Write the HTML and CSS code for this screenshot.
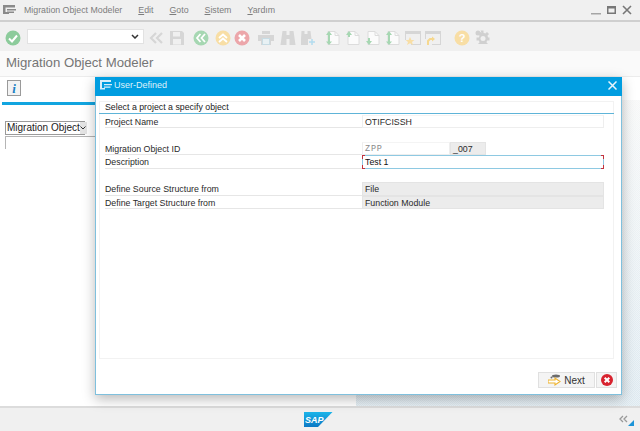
FILE: index.html
```html
<!DOCTYPE html>
<html lang="en">
<head>
<meta charset="utf-8">
<title>Migration Object Modeler</title>
<link rel="stylesheet" href="styles.css">
</head>
<body>
<div class="app">
  <header class="menubar">
    <svg class="menu-ico" width="13" height="10" viewBox="0 0 13 10"><path d="M0 0h12v2.500H2.500V7H6v2H0z" fill="#8a8a8a"/><path d="M4 4h9v1.500H4zM4 6.500h7V8H4z" fill="#8a8a8a"/></svg>
    <nav class="menus">
      <span class="menu">Migration Object Modeler</span>
      <span class="menu"><u>E</u>dit</span>
      <span class="menu"><u>G</u>oto</span>
      <span class="menu"><u>S</u>istem</span>
      <span class="menu"><u>Y</u>ardım</span>
    </nav>
    <div class="winctl">
      <svg width="10" height="10" viewBox="0 0 10 10"><rect x="0" y="8" width="10" height="1.500" fill="#a5a5a5"/></svg>
      <svg width="9" height="10" viewBox="0 0 9 10"><path d="M0 1h9v8H0zM1.500 3.500v4h6v-4z" fill="#777" fill-rule="evenodd"/></svg>
      <svg width="10" height="10" viewBox="0 0 10 10"><path d="M1 1l8 8M9 1l-8 8" stroke="#777" stroke-width="1.600"/></svg>
    </div>
  </header>

  <div class="toolbar">
    <svg class="ic" viewBox="0 0 16 16"><circle cx="8" cy="8" r="7.500" fill="#8ccb9b"/><path d="M4 8.500l3 3 5-6" fill="none" stroke="#fff" stroke-width="2"/></svg>
    <div class="cmd"><svg width="8" height="5" viewBox="0 0 8 5"><path d="M1 1l3 3 3-3" fill="none" stroke="#333" stroke-width="1.500"/></svg></div>
    <svg class="ic" viewBox="0 0 16 16"><path d="M8 3L3 8l5 5M14 3L9 8l5 5" fill="none" stroke="#d6d6d6" stroke-width="2.200"/></svg>
    <svg class="ic ml5" viewBox="0 0 16 16"><path d="M1 1h12l2 2v12H1z" fill="#d6d6d6"/><rect x="4" y="2" width="7" height="4.500" fill="#f0f0f0"/><rect x="4" y="9" width="8" height="5.500" fill="#f0f0f0"/></svg>
    <svg class="ic ml8" viewBox="0 0 16 16"><circle cx="8" cy="8" r="7.500" fill="#a6d7b2"/><path d="M7.500 4L4 8l3.500 4M12 4L8.500 8l3.500 4" fill="none" stroke="#fff" stroke-width="1.800"/></svg>
    <svg class="ic ml6" viewBox="0 0 16 16"><circle cx="8" cy="8" r="7.500" fill="#f8dea5"/><path d="M4 8l4-3.500L12 8M4 12l4-3.500 4 3.500" fill="none" stroke="#fff" stroke-width="1.800"/></svg>
    <svg class="ic ml3" viewBox="0 0 16 16"><circle cx="8" cy="8" r="7.500" fill="#eca6aa"/><path d="M5 5l6 6M11 5l-6 6" stroke="#fff" stroke-width="2.600"/></svg>
    <svg class="ic ml8" viewBox="0 0 16 16"><path d="M4 1h8v3H4z" fill="#d6d6d6"/><path d="M0 5h16v6h-3v4H3v-4H0z" fill="#d6d6d6"/><rect x="4.500" y="8.500" width="7" height="6" fill="#e8f1f4" stroke="#c8dce4"/></svg>
    <svg class="ic ml6" viewBox="0 0 16 16"><path d="M2.500 1h4v4h3V1h4l2 14h-6V9H6.500v6h-6z" fill="#d6d6d6"/></svg>
    <svg class="ic" viewBox="0 0 16 16"><path d="M1.500 1h3v3h3V1h3l1 8H8v6H1V9z" fill="#d6d6d6"/><path d="M12 9v6M9 12h6" stroke="#b2dbee" stroke-width="1.500"/></svg>
    <svg class="ic ml8" viewBox="0 0 16 16"><use href="#doc"/><path d="M5 1L2 5h6zM5 15l-3-3.500h6z" fill="#a6d7b2"/><rect x="4" y="4" width="2" height="8" fill="#a6d7b2"/></svg>
    <svg class="ic" viewBox="0 0 16 16"><use href="#doc"/><path d="M5 1L2 5h6z" fill="#a6d7b2"/><rect x="4" y="4" width="2" height="3" fill="#a6d7b2"/></svg>
    <svg class="ic" viewBox="0 0 16 16"><use href="#doc"/><path d="M5 15l-3-4h6z" fill="#a6d7b2"/><rect x="4" y="8" width="2" height="3" fill="#a6d7b2"/></svg>
    <svg class="ic" viewBox="0 0 16 16"><use href="#doc"/><path d="M5 1L2 5h6zM5 15l-3-3.500h6z" fill="#a6d7b2"/><rect x="4" y="4" width="2" height="8" fill="#a6d7b2"/></svg>
    <svg class="ic ml5" viewBox="0 0 16 16"><path d="M0 1h16v14H6v-1h9V4H1v6H0z" fill="#d6d6d6"/><path d="M5 7l1.400 3h3L7 12l1 3-3-1.800L2 15l1-3-2.400-2h3z" fill="#f8dea5"/></svg>
    <svg class="ic" viewBox="0 0 16 16"><path d="M0 1h16v14H7v-1h8V4H1v5H0z" fill="#d6d6d6"/><path d="M3 15v-4l2-2h3" fill="none" stroke="#f6d88f" stroke-width="2"/><path d="M7 6.500l3 2.500-3 2.500z" fill="#f6d88f"/></svg>
    <svg class="ic ml13" viewBox="0 0 16 16"><circle cx="8" cy="8" r="7.500" fill="#f8dea5"/><text class="help" x="8" y="12" text-anchor="middle">?</text></svg>
    <svg class="ic ml5" viewBox="0 0 16 16"><g fill="#d0d0d0"><path d="M7 2h3v2.300l1.800.8 1.700-1.600 2 2-1.600 1.700.8 1.800H16v3h-2.300l-.8 1.800 1.600 1.700H4.500l1.600-1.700-.8-1.800H3v-3h2.300l.8-1.800-1.600-1.700 2-2L8 4.300z" transform="translate(-1.500 -1.500)"/><circle cx="3" cy="3" r="2.500"/></g><circle cx="8" cy="8.500" r="2.500" fill="#f0f0f0"/></svg>
  </div>

  <div class="titlebar">Migration Object Modeler</div>

  <div class="apptools">
    <button class="info" type="button"><i>i</i></button>
  </div>

  <main class="work">
    <section class="left">
      <div class="tabline"></div>
      <div class="select"><span>Migration Object</span><b><svg width="6" height="4" viewBox="0 0 6 4"><path d="M.5.500l2.500 2.500L5.500.500" fill="none" stroke="#333"/></svg></b></div>
      <div class="tree"></div>
    </section>
    <section class="side"></section>
  </main>

  <footer class="status">
    <svg class="sap" width="29" height="15" viewBox="0 0 29 15"><defs><linearGradient id="sapg" x1="0" y1="0" x2="0" y2="1"><stop offset="0" stop-color="#1cb5ea"/><stop offset="1" stop-color="#0b78c4"/></linearGradient></defs><path d="M0 0h28.500L14 15H0z" fill="url(#sapg)"/><text class="saptext" x="1" y="11">SAP</text></svg>
    <div class="status-end">
      <svg width="9" height="8" viewBox="0 0 9 8"><path d="M4 1L1 4l3 3M8 1L5 4l3 3" fill="none" stroke="#999" stroke-width="1.300"/></svg>
      <svg class="grip" width="6" height="6" viewBox="0 0 6 6"><path d="M6 0v6H0z" fill="#1c94d8"/></svg>
    </div>
  </footer>
</div>

<div class="dialog">
  <div class="dlg-head">
    <svg width="12" height="10" viewBox="0 0 12 10"><path d="M0 0h11v2H2v6h3v1.500H0z" fill="#d8eef9"/><path d="M4 4h8v1.300H4zM4 6.500h6.500v1.300H4z" fill="#d8eef9"/></svg>
    <span class="dlg-title">User-Defined</span>
    <svg class="dlg-x" width="9" height="9" viewBox="0 0 9 9"><path d="M.5.500l8 8M8.500.500l-8 8" stroke="#e8f5fc" stroke-width="1.500"/></svg>
  </div>
  <div class="dlg-body">
    <div class="group">
      <div class="group-title">Select a project a specify object</div>
      <div class="form">
        <label class="lbl">Project Name</label>
        <div class="field">OTIFCISSH</div>

        <div class="blank"></div>

        <label class="lbl">Migration Object ID</label>
        <div class="combo"><div class="field zpp">ZPP</div><div class="field ro short">_007</div></div>

        <label class="lbl">Description</label>
        <div class="field focus">Test 1<i class="c tl"></i><i class="c tr"></i><i class="c bl"></i><i class="c br"></i></div>

        <div class="blank"></div>

        <label class="lbl">Define Source Structure from</label>
        <div class="field ro">File</div>

        <label class="lbl">Define Target Structure from</label>
        <div class="field ro">Function Module</div>
      </div>
    </div>
    <div class="dlg-foot">
      <button class="btn next" type="button">
        <svg width="14" height="13" viewBox="0 0 14 13"><ellipse cx="8" cy="2" rx="4" ry="1.500" fill="#6b6b6b"/><circle cx="3.500" cy="3.500" r="1" fill="#6b6b6b"/><path d="M0 6h7V4l5 3.500L7 11V9H0z" fill="#fff" stroke="#eeb32f" stroke-width="1.100"/></svg>
        <span>Next</span>
      </button>
      <button class="btn cancel" type="button">
        <svg width="12" height="12" viewBox="0 0 12 12"><circle cx="6" cy="6" r="6" fill="#d8232f"/><path d="M3.700 3.700l4.600 4.600M8.300 3.700l-4.600 4.600" stroke="#fff" stroke-width="2"/></svg>
      </button>
    </div>
  </div>
</div>

<svg class="defs" width="0" height="0"><defs><g id="doc"><path d="M4 1.500h7l4 4V14.500H4z" fill="#fbfbfb" stroke="#dcdcdc"/><path d="M11 1.500v4h4" fill="none" stroke="#dcdcdc"/></g></defs></svg>
</body>
</html>
```
FILE: styles.css
```css
* { box-sizing: border-box; }
html, body { margin: 0; height: 100%; overflow: hidden; background: #fff; }
body { font-family: "Liberation Sans", Arial, sans-serif; color: #222; font-size: 10px; }

.app { width: 640px; height: 431px; display: flex; flex-direction: column; }

.menubar {
  height: 22px; flex: none; display: flex; align-items: center;
  background: #f0f0f0; border-bottom: 2px solid #cfcfcf; padding: 0 8px 0 3px;
}
.menu-ico { flex: none; }
.menus { display: flex; gap: 16px; margin-left: 8px; font-size: 8.800px; color: #7d7d7d; }
.menu u { text-decoration-thickness: 1px; text-underline-offset: 1px; }
.winctl { margin-left: auto; display: flex; gap: 6px; align-items: center; }

.toolbar { height: 29px; flex: none; display: flex; align-items: center; gap: 4px; padding: 2px 0 0 5px; background: #f0f0f0; }
.ic { width: 16px; height: 16px; flex: none; }
.ml3 { margin-left: -1px; }
.ml5 { margin-left: 1px; }
.ml6 { margin-left: 2px; }
.ml8 { margin-left: 4px; }
.ml13 { margin-left: 9px; }
.cmd {
  width: 117px; height: 15px; margin: -3px 0 0 2px; background: #fff; border: 1px solid #e2e2e2;
  display: flex; align-items: center; justify-content: flex-end; padding-right: 4px;
}
.help { font: bold 11px "Liberation Sans", sans-serif; fill: #fff; }

.titlebar {
  height: 25px; flex: none; background: #fafafa; padding: 2px 0 0 6px;
  font-size: 13.200px; line-height: 20px; color: #757575;
}

.apptools { height: 24px; flex: none; background: #fff; padding: 3px 0 0 7px; border-top: 1px solid #ececec; }
.info {
  width: 14px; height: 16px; padding: 0; background: #f3f3f3; border: 1px solid #9a9a9a;
  font: italic bold 13px/13px "Liberation Serif", serif; color: #1a7fc4;
}

.work { flex: 1; display: flex; min-height: 0; }
.left { width: 356px; flex: none; padding: 2px 0 0 2px; }
.tabline { height: 3px; background: #12a5e0; }
.select {
  width: 80px; height: 14px; margin: 16px 0 0 3px; border: 1px solid #9a9a9a; display: flex;
  font-size: 10px; line-height: 12px; color: #222; padding-left: 1px; white-space: nowrap;
}
.select span { flex: 1; }
.select b { width: 7px; flex: none; background: #e4e4e4; display: flex; align-items: center; justify-content: center; }
.tree { width: 100px; height: 13px; margin: 1px 0 0 3px; border-top: 1px solid #b5b5b5; border-left: 1px solid #b5b5b5; }
.side {
  flex: 1;
  background:
    repeating-conic-gradient(rgba(255,255,255,.35) 0 25%, transparent 0 50%) 0 0 / 2px 2px,
    linear-gradient(#f7f8f8, #dde9f0);
}

.status {
  height: 25px; flex: none; background: #f0f0f0; border-top: 2px solid #dcdcdc;
  display: flex; align-items: center; position: relative; justify-content: center; padding-right: 4px;
}
.sap { flex: none; }
.saptext { font: italic bold 9px "Liberation Sans", sans-serif; fill: #fff; }
.status-end { position: absolute; right: 6px; top: 4px; display: flex; align-items: flex-end; gap: 0; height: 14px; }
.status-end svg:first-child { margin-bottom: 3px; }

.dialog {
  position: absolute; left: 95px; top: 77px; width: 527px; height: 318px;
  background: #fff; border: 1px solid #7fc0dd; display: flex; flex-direction: column;
  box-shadow: 0 4px 12px rgba(0,0,0,.28);
}
.dlg-head { height: 19px; flex: none; margin: -1px -1px 0; background: #009de0; display: flex; align-items: center; padding: 0 5px 3px 5px; color: #dff2fb; }
.dlg-title { margin-left: 2px; font-size: 9px; }
.dlg-x { margin-left: auto; }
.dlg-body { flex: 1; padding: 5px 7px 6px 3px; display: flex; flex-direction: column; min-height: 0; }
.group { flex: 1; border: 1px solid #f2f2f2; padding: 0 0 0 5px; min-height: 0; }
.group-title { height: 12px; margin: 0 -1px 0 -6px; padding: 0 0 0 6px; border-bottom: 1px solid #5eb4d8; font-size: 8.800px; line-height: 11px; color: #222; }
.form { display: grid; grid-template-columns: 257px 242px; grid-auto-rows: 13.500px; margin-top: .5px; font-size: 8.800px; color: #2a2a2a; }
.lbl { display: block; border-bottom: 1px solid #e6e6e6; line-height: 14.500px; padding-left: 0; }
.blank { grid-column: 1 / -1; }
.field {
  position: relative; background: #fff; border: 1px solid #eeeeee; border-top-color: #f4f4f4; padding-left: 2px;
  line-height: 12.500px; white-space: nowrap; color: #2a2a2a;
}
.combo { display: flex; }
.zpp { width: 88px; font-family: "Liberation Mono", monospace; color: #8a8a8a; font-size: 8.500px; letter-spacing: .8px; }
.ro { background: #ececec; border-color: #e4e4e4; }
.short { width: 36px; }
.focus { border: 1px solid #8ec9e2; color: #111; }
.c { position: absolute; width: 3px; height: 4px; border: 0 solid #c4323d; }
.tl { left: -1px; top: -1px; border-width: 1px 0 0 1px; }
.tr { right: -1px; top: -1px; border-width: 1px 1px 0 0; }
.bl { left: -1px; bottom: -1px; border-width: 0 0 1px 1px; }
.br { right: -1px; bottom: -1px; border-width: 0 1px 1px 0; }

.dlg-foot { height: 29px; flex: none; display: flex; justify-content: flex-end; align-items: flex-end; gap: 1px; margin-right: -3px; }
.btn { height: 16px; padding: 0; background: #f4f4f4; border: 1px solid #e0e0e0; display: flex; align-items: center; justify-content: center; }
.next { width: 57px; gap: 2px; font: 10px "Liberation Sans", sans-serif; color: #333; }
.cancel { width: 21px; }
.defs { position: absolute; }
```
